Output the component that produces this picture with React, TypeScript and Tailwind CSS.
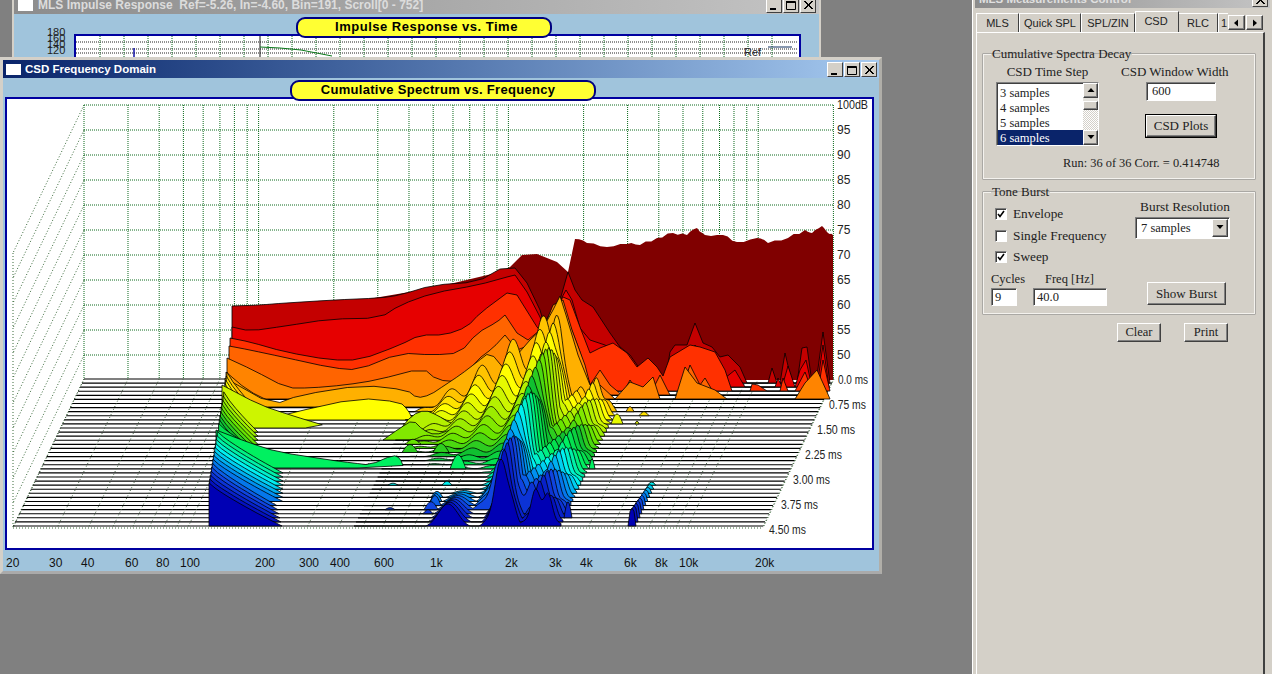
import { useMemo } from "react";

type Pt = [number, number];

const sans = "font-['Liberation_Sans',Arial,sans-serif]";
const serif = "font-['Liberation_Serif','Times_New_Roman',serif]";

const FREQS = [20, 30, 40, 50, 60, 70, 80, 90, 100, 200, 300, 400, 500, 600, 700, 800, 900, 1000, 2000, 3000, 4000, 5000, 6000, 7000, 8000, 9000, 10000, 20000];
const freqX = (f: number) => 84 + 249.8 * Math.log10(f / 20);
const base = (t: number) => 379 + 4.083 * t;
const shift = (t: number) => 1.972 * t;

const STOPS: [number, string][] = [
  [0, "#800000"], [1, "#c40000"], [2, "#e60000"], [3, "#ff3000"], [4, "#ff6400"], [5, "#ff8400"], [6, "#ff9c00"], [8, "#ffc400"],
  [10, "#ffff00"], [13, "#b4f000"], [16, "#68e400"], [19, "#10c030"], [22, "#00f060"], [26, "#00f0f0"], [29, "#0090f0"], [32, "#1044e0"], [36, "#0000b4"],
];

function sliceColor(t: number) {
  for (let i = 1; i < STOPS.length; i++) {
    if (t <= STOPS[i][0]) {
      const [t0, c0] = STOPS[i - 1];
      const [t1, c1] = STOPS[i];
      const k = (t - t0) / (t1 - t0);
      const mix = (a: number) => {
        const p = parseInt(c0.slice(a, a + 2), 16);
        const q = parseInt(c1.slice(a, a + 2), 16);
        return Math.round(p + (q - p) * k);
      };
      return `rgb(${mix(1)},${mix(3)},${mix(5)})`;
    }
  }
  return STOPS[STOPS.length - 1][1];
}

// slices read off the picture, back to front
const HAND: Record<number, Pt[][]> = {
  0: [[[232, 312], [333, 305], [433, 288], [500, 272], [510, 267], [522, 255], [537, 254], [557, 262], [568, 272], [575, 239], [587, 243], [607, 247], [627, 244], [640, 245], [657, 238], [673, 233], [687, 235], [697, 228], [705, 235], [723, 235], [737, 242], [757, 238], [768, 243], [788, 238], [805, 230], [812, 233], [822, 226], [828, 233], [833, 235], [833, 380], [232, 380]]],
  1: [[[232, 306], [260, 305], [285, 303], [333, 300], [380, 298], [400, 295], [433, 285], [477, 282], [500, 269], [515, 268], [527, 283], [540, 310], [547, 335], [560, 300], [568, 272], [575, 290], [582, 300], [593, 307], [610, 333], [620, 347], [630, 355], [642, 372], [650, 383], [665, 383], [670, 352], [675, 345], [687, 345], [695, 323], [703, 343], [712, 347], [720, 357], [728, 355], [740, 367], [747, 383], [768, 383], [772, 368], [777, 383], [780, 383], [785, 353], [792, 383], [797, 383], [802, 348], [807, 347], [812, 383], [816, 383], [823, 332], [830, 383], [232, 383]]],
  2: [[[232, 327], [250, 331], [285, 326], [330, 319], [380, 318], [400, 305], [433, 293], [478, 285], [507, 277], [515, 275], [527, 292], [540, 317], [546, 333], [555, 310], [566, 290], [572, 300], [580, 328], [590, 340], [605, 345], [620, 355], [635, 372], [650, 387], [668, 387], [674, 362], [685, 360], [695, 345], [706, 360], [716, 365], [725, 378], [735, 370], [745, 387], [775, 387], [778, 378], [782, 387], [788, 366], [795, 387], [800, 370], [806, 360], [812, 387], [817, 387], [823, 345], [829, 387], [232, 387]]],
  3: [[[230, 338], [250, 342], [285, 352], [330, 360], [360, 360], [400, 345], [420, 335], [445, 335], [467, 327], [480, 313], [507, 293], [517, 295], [537, 327], [544, 335], [555, 310], [563, 297], [570, 300], [580, 327], [590, 353], [600, 348], [613, 343], [627, 353], [637, 367], [648, 358], [657, 367], [663, 376], [670, 357], [690, 345], [700, 347], [715, 352], [725, 370], [732, 391], [750, 391], [752, 384], [758, 385], [767, 391], [780, 391], [783, 378], [788, 391], [795, 391], [805, 372], [812, 391], [818, 391], [823, 360], [830, 391], [230, 391]]],
  4: [[[229, 346], [250, 350], [283, 357], [333, 368], [358, 370], [400, 353], [433, 355], [460, 353], [477, 333], [497, 322], [505, 315], [517, 333], [528, 340], [540, 330], [552, 310], [560, 300], [568, 320], [580, 352], [590, 385], [600, 370], [610, 385], [622, 395], [630, 380], [640, 395], [650, 395], [660, 375], [670, 395], [680, 395], [690, 365], [700, 385], [705, 378], [715, 395], [810, 395], [818, 380], [825, 395], [229, 395]]],
  5: [[[227, 358], [253, 370], [287, 388], [310, 388], [345, 385], [377, 380], [423, 368], [437, 380], [460, 382], [477, 360], [493, 348], [505, 335], [517, 350], [530, 345], [545, 325], [553, 305], [563, 300], [572, 330], [585, 365], [592, 392], [600, 385], [615, 399], [630, 382], [643, 387], [653, 377], [660, 399], [675, 399], [685, 367], [697, 383], [715, 390], [727, 399], [795, 399], [805, 383], [817, 370], [827, 392], [830, 399], [227, 399]]],
  6: [[[226, 372], [247, 390], [273, 403], [226, 403]]],
  7: [[[225, 378], [273, 405], [300, 395], [363, 385], [407, 390], [417, 398], [430, 395], [445, 385], [460, 375], [477, 362], [490, 352], [505, 370], [517, 355], [530, 340], [543, 328], [553, 310], [560, 296], [566, 315], [578, 355], [590, 385], [600, 395], [610, 407], [225, 407]]],
  10: [[[268, 420], [290, 413], [358, 398], [400, 402], [408, 410], [413, 420]]],
  12: [[[222, 385], [260, 405], [290, 415], [333, 428], [222, 428]]],
  13: [[[398, 432], [412, 415], [425, 410], [437, 415], [450, 423], [470, 430], [470, 432]]],
  15: [[[383, 440], [400, 428], [413, 420], [423, 430], [435, 435], [450, 430], [465, 428], [467, 440]]],
  22: [[[216, 430], [250, 443], [278, 452], [330, 460], [353, 463], [370, 465], [393, 455], [400, 458], [404, 468], [216, 468]]],
};

// little hills standing alone on a slice: [slice, x, height, half width]
const BLIPS: [number, number, number, number][] = [
  [8, 630, 5, 4], [9, 644, 4, 5], [11, 617, 10, 6], [11, 637, 3, 2], [16, 413, 5, 8], [18, 410, 8, 8], [18, 441, 9, 8], [22, 458, 14, 8],
  [22, 592, 10, 3], [26, 447, 4, 5], [26, 393, 2, 5], [29, 437, 6, 6], [30, 436, 8, 6], [31, 435, 10, 6], [32, 431, 8, 7], [32, 390, 2, 5], [33, 428, 4, 5], [34, 568, 16, 4],
];

function poly(points: Pt[]) {
  return points.map(([x, y]) => `${x.toFixed(1)},${y.toFixed(1)}`).join(" ");
}

// rounds the slow low-frequency part, leaves the spiky top end alone
function soften(p: Pt[]) {
  const out: Pt[] = [p[0]];
  for (let i = 1; i < p.length - 1; i++) {
    const [x, y] = p[i];
    if (x < 500) {
      const [px, py] = p[i - 1];
      const [nx, ny] = p[i + 1];
      out.push([x + (px - x) * 0.25, y + (py - y) * 0.25], [x + (nx - x) * 0.25, y + (ny - y) * 0.25]);
    } else {
      out.push(p[i]);
    }
  }
  out.push(p[p.length - 1]);
  return out;
}

// small ragged edge along the maroon top
function ragged(p: Pt[]) {
  const out: Pt[] = [];
  p.forEach((pt, i) => {
    out.push(pt);
    const next = p[i + 1];
    if (next && pt[0] >= 575 && next[0] > pt[0] && pt[1] < 300) {
      for (let k = 1; k < 3; k++) {
        const x = pt[0] + ((next[0] - pt[0]) * k) / 3;
        const y = pt[1] + ((next[1] - pt[1]) * k) / 3 + Math.sin(x * 1.7) * 1.3;
        out.push([x, y]);
      }
    }
  });
  return out;
}

function ridgeHeight(u: number, t: number) {
  const a = 107 - 0.86 * t;
  const d = u - 575;
  const w = d < 0 ? (t >= 33 ? 13 : 22) : 10;
  const ridge = a * Math.exp(-(d * d) / (w * w)) * (0.86 + 0.14 * Math.sin(u / 3.1 + t * 0.7));
  const lobe = 36 + (t > 20 ? (t - 20) * 0.7 : 0);
  const ripple = 0.8 + 0.2 * Math.sin(u / 2.5 + t);
  let second = lobe * Math.exp(-Math.pow((u - 612) / 14, 2)) * ripple;
  if (u > 575 && u < 612 && t < 34) second = Math.max(second, lobe * 0.75 * ripple);
  const fade = Math.pow(Math.max(0, 1 - (t - 8) / 18), 1.8);
  const up = u < 575 ? Math.min(1, Math.max(0, (u - 425) / 130)) : Math.max(0, 1 - (u - 575) / 12);
  const shoulder = fade * 98 * Math.pow(up, 1.2) * (0.75 + 0.25 * Math.sin(u / 5 + t * 0.35));
  const front = t >= 27 ? 24 * ((t - 26) / 10) * Math.exp(-Math.pow((u - 519) / 14, 2)) : 0;
  return Math.max(0, Math.max(ridge, second, shoulder, front) - 2);
}

function buildSlices() {
  const out: { key: string; points: string; fill: string }[] = [];
  for (let t = 0; t <= 36; t++) {
    const fill = sliceColor(t);
    const b = base(t);
    const dx = shift(t);
    (HAND[t] || []).forEach((p, i) => out.push({ key: `h${t}-${i}`, points: poly(t === 0 ? ragged(p) : soften(p)), fill }));
    if (t >= 8) {
      if (t !== 12 && t !== 22) {
        const xL = 232 - 0.64 * t;
        const yL = Math.min(b, 372 + (t - 8) * 3.96);
        const xE = t <= 20 ? 258 : t <= 30 ? 283 : 276 + (t - 30);
        const left: Pt[] = [[xL, b], [xL, yL]];
        for (let x = xL + 6; x < xE; x += 6) {
          left.push([x, yL + (b - yL) * Math.pow((x - xL) / (xE - xL), 0.85)]);
        }
        left.push([xE, b]);
        out.push({ key: `l${t}`, points: poly(left), fill });
      }
      const mid: Pt[] = [[425 - dx, b]];
      for (let u = 425; u <= 632; u += 1.5) mid.push([u - dx, b - ridgeHeight(u, t)]);
      mid.push([632 - dx, b]);
      out.push({ key: `m${t}`, points: poly(mid), fill });
    }
    BLIPS.filter((item) => item[0] === t).forEach(([, x, h, w], i) => {
      const pts: Pt[] = [[x - w, b]];
      for (let k = -w; k <= w; k += 1) pts.push([x + k, b - h * Math.cos((k / w) * (Math.PI / 2))]);
      pts.push([x + w, b]);
      out.push({ key: `b${t}-${i}`, points: poly(pts), fill });
    });
    if (t >= 26) {
      const x = 703 - dx;
      const h = 3 + (t - 26) * 1.5;
      out.push({ key: `s${t}`, points: poly([[x - 4, b], [x - 2, b - h * 0.8], [x, b - h], [x + 2, b - h * 0.8], [x + 4, b]]), fill });
    }
  }
  return out;
}

const DB = [100, 95, 90, 85, 80, 75, 70, 65, 60, 55, 50];
const MS: [string, number, number][] = [["0.0", 838, 30], ["0.75", 829, 37], ["1.50", 817, 38], ["2.25", 805, 37], ["3.00", 793, 37], ["3.75", 781, 37], ["4.50", 769, 37]];
const AXIS: [string, number][] = [["20", 3], ["30", 46], ["40", 78], ["60", 122], ["80", 153], ["100", 177], ["200", 252], ["300", 296], ["400", 327], ["600", 371], ["1k", 427], ["2k", 502], ["3k", 546], ["4k", 577], ["6k", 621], ["8k", 652], ["10k", 676], ["20k", 752]];

function CsdChart() {
  const slices = useMemo(buildSlices, []);
  return (
    <svg viewBox="7 99 865 449" className="block w-[865px] h-[449px]">
      {DB.map((_, i) => (
        <g key={i}>
          <line x1={84} x2={834} y1={105 + i * 25} y2={105 + i * 25} stroke="#0c6a1c" strokeDasharray="1 1" />
          <line x1={84} x2={13} y1={105 + i * 25} y2={253 + i * 25} stroke="#3a6a3a" strokeDasharray="1 2" />
        </g>
      ))}
      <line x1={84} x2={13} y1={379} y2={527} stroke="#3a6a3a" strokeDasharray="1 2" />
      <line x1={13} x2={13} y1={253} y2={527} stroke="#3a6a3a" strokeDasharray="1 2" />
      {FREQS.map((f) => (
        <line key={f} x1={freqX(f)} x2={freqX(f)} y1={105} y2={379} stroke="#0c6a1c" strokeDasharray="1 1" />
      ))}
      {Array.from({ length: 37 }, (_, t) => (
        <line key={t} x1={84 - shift(t)} x2={834 - shift(t)} y1={base(t)} y2={base(t)} stroke="#000" strokeWidth={1.1} />
      ))}
      {FREQS.map((f) => (
        <line key={f} x1={freqX(f)} x2={freqX(f) - 71} y1={379} y2={528} stroke="#3a5a3a" strokeDasharray="1 2" />
      ))}
      <line x1={13} x2={763} y1={528} y2={528} stroke="#3a6a3a" strokeDasharray="1 2" />
      <line x1={834} x2={763} y1={379} y2={528} stroke="#3a6a3a" strokeDasharray="1 2" />
      {slices.map((s) => (
        <polygon key={s.key} points={s.points} fill={s.fill} stroke={s.fill === "rgb(128,0,0)" ? "none" : "#000"} strokeWidth={0.8} strokeLinejoin="round" />
      ))}
      <g className={`${sans} text-[12px]`} fill="#222">
        {DB.map((d, i) => (
          <text key={d} x={837} y={109 + i * 25} textLength={d === 100 ? 31 : undefined} lengthAdjust="spacingAndGlyphs">
            {d === 100 ? "100dB" : d}
          </text>
        ))}
        {MS.map(([m, x, w], i) => (
          <text key={m} x={x} y={384 + i * 25} textLength={w} lengthAdjust="spacingAndGlyphs">
            {m} ms
          </text>
        ))}
      </g>
    </svg>
  );
}

function ImpulsePlot() {
  const cols = Array.from({ length: 29 }, (_, i) => 24 + i * 24);
  return (
    <svg viewBox="0 0 722 22" className="block w-[722px] h-[22px]">
      {[6, 13, 17].map((y) => (
        <line key={y} x1={0} x2={722} y1={y} y2={y} stroke="#222" strokeDasharray="1 1" />
      ))}
      {cols.map((x) => (
        <line key={x} x1={x} x2={x} y1={0} y2={22} stroke="#0c6a1c" strokeDasharray="1 1" />
      ))}
      <line x1={184} x2={184} y1={0} y2={22} stroke="#111" />
      <polyline points="184,11 204,12 225,14 256,20" fill="none" stroke="#0a7a1a" />
      <line x1={58} x2={58} y1={12} y2={22} stroke="#0000a0" strokeWidth={1.4} />
      <line x1={692} x2={716} y1={11} y2={11} stroke="#103060" />
      <text x={668} y={20} className={`${sans} text-[11px]`} fill="#222">Ref</text>
    </svg>
  );
}

function CapButton({ kind }: { kind: "min" | "max" | "close" }) {
  return (
    <span className="flex h-[15px] w-[16px] items-center justify-center border border-t-white border-l-white border-r-[#404040] border-b-[#404040] bg-[#d4d0c8]">
      <svg viewBox="0 0 10 10" className="h-[10px] w-[10px]" fill="none" stroke="#000">
        {kind === "min" && <rect x="1" y="8" width="6" height="2" fill="#000" stroke="none" />}
        {kind === "max" && <path d="M0.5 1.5h9v8h-9zM0.5 1v1.5h9" />}
        {kind === "close" && <path d="M1 1l8 8M2 1l8 8M9 1l-8 8M10 1l-8 8" strokeWidth="1" />}
      </svg>
    </span>
  );
}

function Pill({ text, className }: { text: string; className: string }) {
  return (
    <div className={`relative z-10 flex h-[21px] items-center justify-center rounded-[9px] border-2 border-[#000080] bg-[#ffff33] pb-[1px] ${className} ${sans} text-[13px] font-bold text-black`}>
      {text}
    </div>
  );
}

function Arrow({ dir }: { dir: "up" | "down" | "left" | "right" }) {
  const d = { up: "M4 1L0.5 5h7z", down: "M0.5 1h7L4 5z", left: "M5 0.5v7L1 4z", right: "M2 0.5v7L6 4z" }[dir];
  return (
    <svg viewBox="0 0 8 8" className="h-[8px] w-[8px]" fill="#000">
      <path d={d} />
    </svg>
  );
}

const raised = "border border-t-white border-l-white border-r-[#404040] border-b-[#404040] bg-[#d4d0c8] shadow-[inset_-1px_-1px_0_#808080]";
const sunken = "border border-t-[#808080] border-l-[#808080] border-r-white border-b-white shadow-[inset_1px_1px_0_#404040] bg-white";

function Button({ label, className }: { label: string; className: string }) {
  return <button className={`${raised} ${className} flex items-center justify-center text-[#222]`}>{label}</button>;
}

function Check({ label, checked }: { label: string; checked?: boolean }) {
  return (
    <div className="flex h-[12px] items-center gap-[6px] text-[13.3px]">
      <span className={`${sunken} flex h-[12px] w-[12px] shrink-0 items-center justify-center`}>
        {checked && (
          <svg viewBox="0 0 8 8" className="h-[8px] w-[8px]" fill="none" stroke="#000" strokeWidth="1.6">
            <path d="M1 4l2 2.5L7 1" />
          </svg>
        )}
      </span>
      <span className="whitespace-nowrap">{label}</span>
    </div>
  );
}

function Tab({ label, className }: { label: string; className: string }) {
  return (
    <div className={`flex h-[19px] items-center justify-center border-t border-l border-r border-t-white border-l-white border-r-[#404040] ${className}`}>{label}</div>
  );
}

function ControlPanel() {
  const items = ["3 samples", "4 samples", "5 samples", "6 samples"];
  return (
    <div className={`absolute left-[972px] top-[-10px] flex h-[690px] w-[300px] flex-col border-l border-l-white bg-[#d4d0c8] ${serif} text-[12.5px] text-[#222]`}>
      <div className="ml-[2px] mr-[2px] mt-[1px] flex h-[17px] items-center justify-between bg-gradient-to-r from-[#8c8c8c] to-[#c4c4c4] pl-[4px] pr-[2px]">
        <span className={`${sans} text-[11.5px] font-bold text-[#e0e0e0]`}>MLS Measurements Control</span>
        <CapButton kind="close" />
      </div>
      <div className={`ml-[3px] mt-[4px] flex h-[20px] items-end ${sans} text-[11px]`}>
        <Tab label="MLS" className="w-[43px]" />
        <Tab label="Quick SPL" className="w-[62px]" />
        <Tab label="SPL/ZIN" className="w-[54px]" />
        <div className="relative z-10 -mr-[1px] flex h-[21px] w-[44px] items-start justify-center border-t border-l border-r border-t-white border-l-white border-r-[#404040] bg-[#d4d0c8] pt-[1px] pr-[2px]">CSD</div>
        <Tab label="RLC" className="w-[40px]" />
        <div className="relative flex h-[19px] w-[10px] items-center overflow-hidden border-t border-l border-t-white border-l-white pl-[2px]">1</div>
        <div className="flex h-[17px] gap-[1px]">
          <span className={`${raised} flex h-[15px] w-[17px] items-center justify-center`}><Arrow dir="left" /></span>
          <span className={`${raised} flex h-[15px] w-[17px] items-center justify-center`}><Arrow dir="right" /></span>
        </div>
      </div>
      <div className="ml-[3px] flex h-[650px] w-[289px] flex-col border-t border-l border-r-2 border-t-white border-l-white border-r-[#404040] pl-[6px] pr-[8px] pt-[14px]">
        <fieldset className="h-[132px] border border-[#f4f2ee] shadow-[0_0_0_0.5px_#808080] pl-[12px] pr-[14px]">
          <legend className="ml-[-5px] px-[1px] leading-[14px] text-[13px]">Cumulative Spectra Decay</legend>
          <div className="flex">
            <div className="flex w-[103px] flex-col">
              <div className="mt-[4px] h-[14px] text-center leading-[14px] text-[13px]">CSD Time Step</div>
              <div className={`${sunken} mt-[3px] flex h-[64px] w-[103px]`}>
                <div className="flex w-[86px] flex-col pl-[2px] pt-[2px]">
                  {items.map((it, i) => (
                    <div key={it} className={`-ml-[1px] h-[15px] pl-[2px] leading-[16px] ${i === 3 ? "bg-[#0a246a] text-white" : ""}`}>{it}</div>
                  ))}
                </div>
                <div className="flex w-[15px] flex-col bg-[#e4e2dc]">
                  <span className={`${raised} flex h-[15px] items-center justify-center`}><Arrow dir="up" /></span>
                  <span className={`${raised} mt-[3px] h-[9px]`} />
                  <span className="flex-1 bg-[repeating-conic-gradient(#d4d0c8_0_25%,#fff_0_50%)] bg-[length:2px_2px]" />
                  <span className={`${raised} flex h-[15px] items-center justify-center`}><Arrow dir="down" /></span>
                </div>
              </div>
            </div>
            <div className="ml-[22px] flex w-[113px] flex-col items-start">
              <div className="mt-[4px] h-[14px] whitespace-nowrap leading-[14px] text-[13px]">CSD Window Width</div>
              <div className={`${sunken} ml-[25px] mt-[3px] flex h-[19px] w-[70px] items-center pl-[5px]`}>600</div>
              <Button label="CSD Plots" className="ml-[25px] mt-[14px] h-[22px] w-[70px] outline outline-1 outline-black text-[13px]" />
            </div>
          </div>
          <div className="mt-[8px] pl-[67px] whitespace-nowrap text-[12.4px]">Run: 36 of 36 Corr. = 0.414748</div>
        </fieldset>
        <fieldset className="mt-[6px] h-[129px] border border-[#f4f2ee] shadow-[0_0_0_0.5px_#808080] pl-[11px] pr-[13px]">
          <legend className="ml-[-4px] px-[1px] leading-[14px] text-[13px]">Tone Burst</legend>
          <div className="flex">
            <div className="flex w-[140px] flex-col gap-[9.5px] pt-[9px]">
              <Check label="Envelope" checked />
              <Check label="Single Frequency" />
              <Check label="Sweep" checked />
            </div>
            <div className="flex flex-col items-center pt-[1px]">
              <div className="ml-[5px] h-[14px] whitespace-nowrap leading-[14px] text-[13.3px]">Burst Resolution</div>
              <div className={`${sunken} mt-[3px] flex h-[22px] w-[95px] items-center justify-between pl-[5px] pr-[1px]`}>
                7 samples
                <span className={`${raised} flex h-[18px] w-[16px] items-center justify-center`}><Arrow dir="down" /></span>
              </div>
            </div>
          </div>
          <div className="mt-[9px] -ml-[4px] flex">
            <div className="flex w-[42px] flex-col">
              <div className="h-[14px] leading-[14px]">Cycles</div>
              <div className={`${sunken} mt-[2px] flex h-[18px] w-[26px] items-center pl-[3px]`}>9</div>
            </div>
            <div className="flex w-[114px] flex-col">
              <div className="ml-[12px] h-[14px] leading-[14px]">Freq [Hz]</div>
              <div className={`${sunken} mt-[2px] flex h-[18px] w-[74px] items-center pl-[3px]`}>40.0</div>
            </div>
            <Button label="Show Burst" className="mt-[10px] h-[23px] w-[79px] text-[13px]" />
          </div>
        </fieldset>
        <div className="mt-[9px] flex pl-[134px] gap-[23px]">
          <Button label="Clear" className="h-[19px] w-[44px]" />
          <Button label="Print" className="h-[19px] w-[44px]" />
        </div>
      </div>
    </div>
  );
}

export default function App() {
  return (
    <div className="relative h-[674px] w-[1272px] overflow-hidden bg-[#808080]">
      <div className="absolute left-[12px] top-[-6px] flex h-[70px] w-[809px] flex-col border-2 border-[#d4d0c8] bg-[#a0c4dc]">
        <div className={`flex h-[18px] shrink-0 items-center bg-gradient-to-r from-[#8c8c8c] to-[#c4c4c4] pl-[4px] pr-[3px] ${sans} text-[12px] font-bold text-[#dcdcdc]`}>
          <span className="mr-[5px] h-[11px] w-[15px] bg-white" />
          <span className="flex-1 whitespace-pre">MLS Impulse Response  Ref=-5.26, In=-4.60, Bin=191, Scroll[0 - 752]</span>
          <span className="flex gap-[1px]"><CapButton kind="min" /><CapButton kind="max" /><CapButton kind="close" /></span>
        </div>
        <div className="flex justify-center pl-[14px] pt-[3px]">
          <Pill text="Impulse Response vs. Time" className="w-[256px] pl-[6px] tracking-[0.5px]" />
        </div>
        <div className="ml-[60px] -mt-[4px] h-[30px] w-[727px] border-2 border-b-0 border-[#0000a0] bg-white">
          <ImpulsePlot />
        </div>
        <div className={`absolute left-[33px] top-[33px] flex flex-col ${sans} text-[11px] leading-[6px] text-[#222]`}>
          <span>180</span><span>160</span><span>140</span><span>120</span>
        </div>
      </div>

      <div className="absolute left-[0px] top-[57px] flex h-[517px] w-[882px] flex-col border-[3px] border-[#d4d0c8] border-b-[#aaa] border-r-[#b0aea8] bg-[#a0c4dc]">
        <div className={`flex h-[18px] shrink-0 items-center bg-gradient-to-r from-[#0a246a] to-[#a6caf0] pl-[3px] pr-[2px] pt-[1px] ${sans} text-[11.5px] font-bold text-white`}>
          <span className="mr-[4px] h-[11px] w-[15px] bg-white" />
          <span className="flex-1">CSD Frequency Domain</span>
          <span className="flex gap-[1px]"><CapButton kind="min" /><CapButton kind="max" /><CapButton kind="close" /></span>
        </div>
        <div className="flex justify-center pl-[4px] pt-[2px]">
          <Pill text="Cumulative Spectrum vs. Frequency" className="w-[306px] pr-[10px] tracking-[0.3px]" />
        </div>
        <div className="ml-[2px] -mt-[4px] w-[869px] border-2 border-[#0000a0] bg-white">
          <CsdChart />
        </div>
        <div className={`relative h-[22px] ${sans} text-[12px] text-[#111]`}>
          {AXIS.map(([label, x]) => (
            <span key={label} className="absolute top-[4px]" style={{ left: x }}>{label}</span>
          ))}
        </div>
      </div>

      <ControlPanel />
    </div>
  );
}
